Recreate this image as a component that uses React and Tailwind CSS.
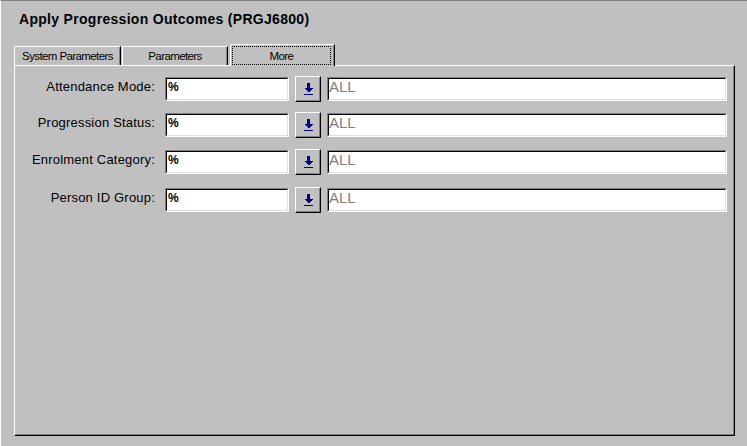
import React from 'react';

const rows = [
    { label: 'Attendance Mode:', gap: '' },
    { label: 'Progression Status:', gap: 'mt-[10px]' },
    { label: 'Enrolment Category:', gap: 'mt-[11px]' },
    { label: 'Person ID Group:', gap: 'mt-[12px]' },
];

function Sunken({ className, children }) {
    return (
        <div className={`border border-t-[#808080] border-l-[#808080] border-b-white border-r-white ${className}`}>
            <div className="h-full border border-t-black border-l-black border-b-[#dfdfdf] border-r-[#dfdfdf] bg-white overflow-hidden">
                {children}
            </div>
        </div>
    );
}

function LovButton() {
    return (
        <div className="ml-[6px] w-[26px] h-[26px] flex items-center justify-center border border-t-white border-l-white border-b-black border-r-black shadow-[inset_-1px_-1px_0_#808080] bg-[#c0c0c0]">
            <svg width="9" height="12" viewBox="0 0 9 12" shapeRendering="crispEdges" className="-mt-px">
                <rect x="3" y="0" width="3" height="5" fill="#000080" />
                <polygon points="0,5 9,5 4.5,9.5" fill="#000080" />
                <rect x="0" y="11" width="9" height="1" fill="#000080" />
            </svg>
        </div>
    );
}

function App() {
    return (
        <div className="w-[747px] h-[446px] bg-[#c0c0c0] border-t border-t-[#808080] border-l border-l-white text-black font-['Liberation_Sans',Arial,sans-serif] overflow-hidden">
            <div className="pl-[18px] pt-[10px] text-[14px] leading-[16px] font-bold tracking-[0.3px]">Apply Progression Outcomes (PRGJ6800)</div>

            <div className="ml-[13px] mt-[17px] h-[21px] flex items-end text-[11.5px] tracking-[-0.6px] leading-[14px]">
                <div className="w-[107px] h-[19px] pt-[2px] text-center border-t border-l border-t-white border-l-white border-r border-r-black shadow-[inset_-1px_0_0_#808080] rounded-tl-[2px]">System Parameters</div>
                <div className="ml-px w-[106px] h-[19px] pt-[2px] text-center border-t border-l border-t-white border-l-white border-r border-r-black shadow-[inset_-1px_0_0_#808080] rounded-tl-[2px]">Parameters</div>
                <div className="ml-[2px] w-[105px] h-[22px] -mb-px relative z-10 bg-[#c0c0c0] flex pl-px pr-[3px] pt-px pb-px border-t border-l border-t-white border-l-white border-r border-r-black shadow-[inset_-1px_0_0_#808080] rounded-tl-[2px]">
                    <div className="flex-1 border border-dotted border-black pt-[2px] text-center">More</div>
                </div>
            </div>

            <div className="ml-[13px] w-[721px] h-[371px] border border-t-white border-l-white border-b-black border-r-black shadow-[inset_-1px_-1px_0_#808080] pt-[10px]">
                {rows.map((r) => (
                    <div key={r.label} className={`flex items-start h-[26px] ${r.gap}`}>
                        <div className="w-[140px] mt-[3px] text-right text-[13px] leading-[15px] tracking-[0.2px]">{r.label}</div>
                        <Sunken className="ml-[10px] mt-px w-[124px] h-[24px]">
                            <div className="pl-px pt-px text-[12px] leading-[14px] font-semibold">%</div>
                        </Sunken>
                        <LovButton />
                        <Sunken className="ml-[6px] mt-px w-[400px] h-[24px]">
                            <div className="text-[15px] leading-[15px] text-[#808080]">ALL</div>
                        </Sunken>
                    </div>
                ))}
            </div>
        </div>
    );
}

export default App;
